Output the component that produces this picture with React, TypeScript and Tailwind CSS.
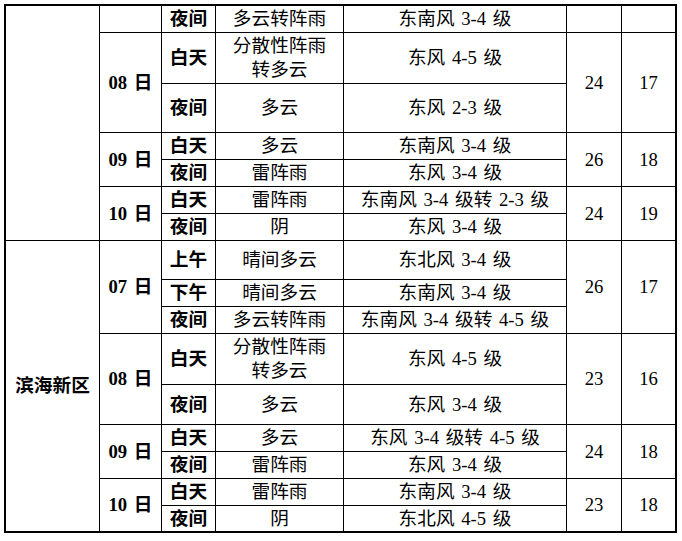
import React from "react";

type Period = { label: string; weather: string[]; wind: string };
type Day = { day: string; periods: Period[]; high?: string; low?: string };

const spanClass: Record<number, string> = {
  1: "",
  2: "row-span-2",
  3: "row-span-3",
  7: "row-span-7",
  9: "row-span-9",
};

const Cell: React.FC<{
  span?: number;
  bold?: boolean;
  children?: React.ReactNode;
}> = ({ span = 1, bold, children }) => (
  <div
    className={`bg-white flex flex-col items-center justify-center text-center text-black ${spanClass[span]} ${
      bold ? "font-bold" : "font-normal"
    }`}
  >
    {children}
  </div>
);

const city: Day[] = [
  {
    day: "08 日",
    high: "24",
    low: "17",
    periods: [
      { label: "白天", weather: ["分散性阵雨", "转多云"], wind: "东风 4-5 级" },
      { label: "夜间", weather: ["多云"], wind: "东风 2-3 级" },
    ],
  },
  {
    day: "09 日",
    high: "26",
    low: "18",
    periods: [
      { label: "白天", weather: ["多云"], wind: "东南风 3-4 级" },
      { label: "夜间", weather: ["雷阵雨"], wind: "东风 3-4 级" },
    ],
  },
  {
    day: "10 日",
    high: "24",
    low: "19",
    periods: [
      { label: "白天", weather: ["雷阵雨"], wind: "东南风 3-4 级转 2-3 级" },
      { label: "夜间", weather: ["阴"], wind: "东风 3-4 级" },
    ],
  },
];

const binhai: Day[] = [
  {
    day: "07 日",
    high: "26",
    low: "17",
    periods: [
      { label: "上午", weather: ["晴间多云"], wind: "东北风 3-4 级" },
      { label: "下午", weather: ["晴间多云"], wind: "东南风 3-4 级" },
      { label: "夜间", weather: ["多云转阵雨"], wind: "东南风 3-4 级转 4-5 级" },
    ],
  },
  {
    day: "08 日",
    high: "23",
    low: "16",
    periods: [
      { label: "白天", weather: ["分散性阵雨", "转多云"], wind: "东风 4-5 级" },
      { label: "夜间", weather: ["多云"], wind: "东风 3-4 级" },
    ],
  },
  {
    day: "09 日",
    high: "24",
    low: "18",
    periods: [
      { label: "白天", weather: ["多云"], wind: "东风 3-4 级转 4-5 级" },
      { label: "夜间", weather: ["雷阵雨"], wind: "东风 3-4 级" },
    ],
  },
  {
    day: "10 日",
    high: "23",
    low: "18",
    periods: [
      { label: "白天", weather: ["雷阵雨"], wind: "东南风 3-4 级" },
      { label: "夜间", weather: ["阴"], wind: "东北风 4-5 级" },
    ],
  },
];

// one day block, laid out in grid flow order
const renderDay = (d: Day) => {
  const n = d.periods.length;
  return d.periods.map((p, i) => (
    <React.Fragment key={d.day + p.label}>
      {i === 0 && (
        <Cell span={n} bold>
          {d.day}
        </Cell>
      )}
      <Cell bold>{p.label}</Cell>
      <Cell>
        {p.weather.map((w) => (
          <span key={w}>{w}</span>
        ))}
      </Cell>
      <Cell>{p.wind}</Cell>
      {i === 0 && (
        <>
          <Cell span={n}>{d.high}</Cell>
          <Cell span={n}>{d.low}</Cell>
        </>
      )}
    </React.Fragment>
  ));
};

export default function App() {
  return (
    <div className="min-h-screen bg-white pl-[4px] pt-[4px]">
      <div className="inline-grid bg-black p-[2px] gap-px grid-cols-[93px_61px_53px_127px_222px_54px_53px] grid-rows-[26px_50px_48px_26px_26px_26px_26px_38px_26px_26px_50px_39px_26px_26px_26px_25px] font-['Liberation_Serif','Noto_Sans_CJK_SC',serif] text-[18.67px] leading-[24px] [word-spacing:2px]">
        {/* first area, name cut off above */}
        <Cell span={7} />
        <Cell />
        <Cell bold>夜间</Cell>
        <Cell>多云转阵雨</Cell>
        <Cell>东南风 3-4 级</Cell>
        <Cell />
        <Cell />
        {city.map((d) => renderDay(d))}

        {/* 滨海新区 */}
        <Cell span={9} bold>
          滨海新区
        </Cell>
        {binhai.map((d) => renderDay(d))}
      </div>
    </div>
  );
}
